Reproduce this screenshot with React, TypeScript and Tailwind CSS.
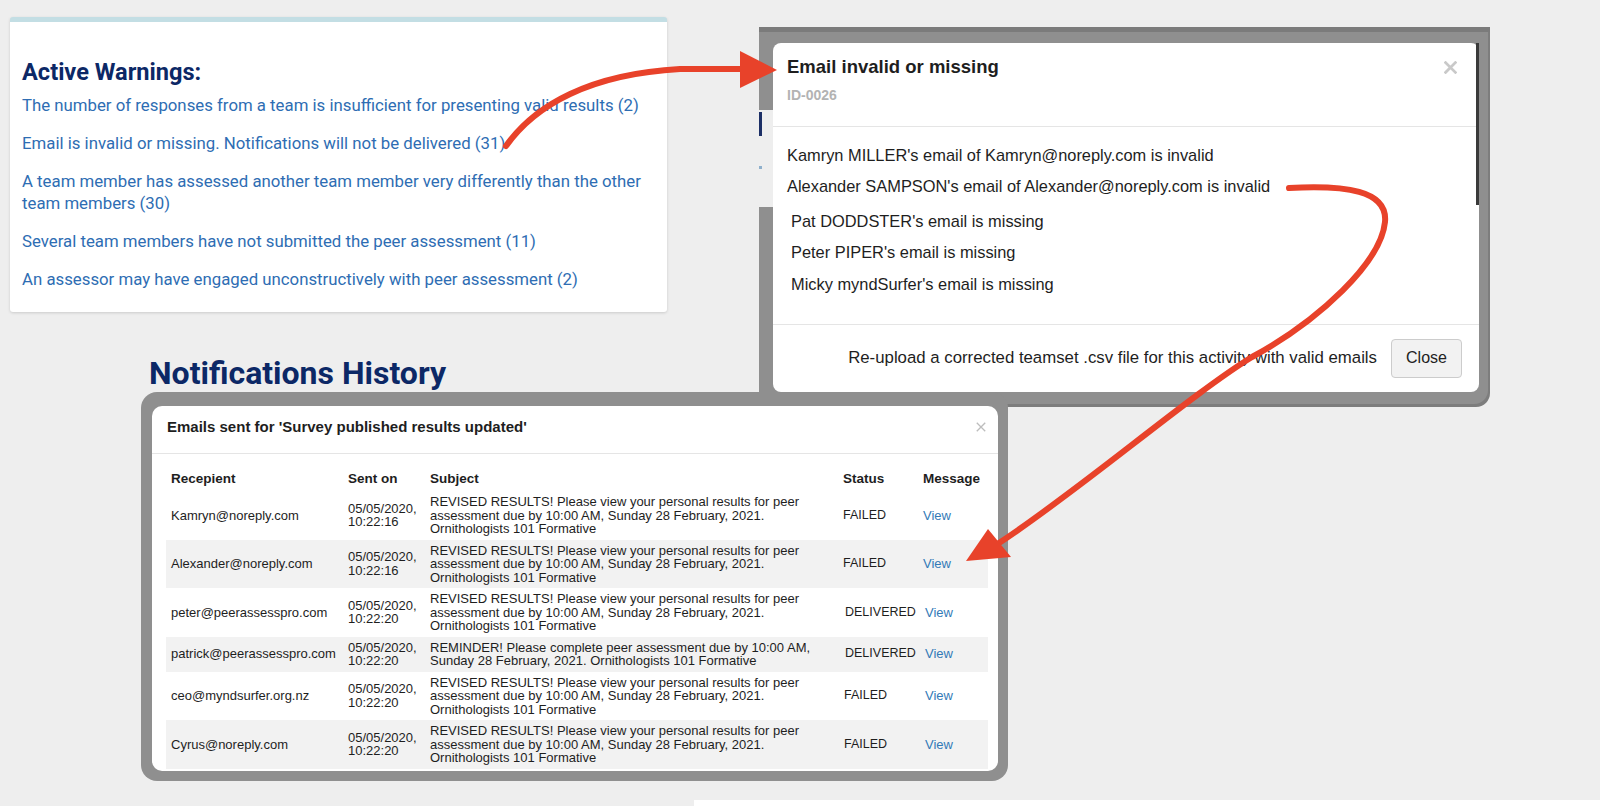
import React from "react";

const REVISED = [
  "REVISED RESULTS! Please view your personal results for peer",
  "assessment due by 10:00 AM, Sunday 28 February, 2021.",
  "Ornithologists 101 Formative",
];
const REMINDER = [
  "REMINDER! Please complete peer assessment due by 10:00 AM,",
  "Sunday 28 February, 2021. Ornithologists 101 Formative",
];

type Row = {
  to: string;
  time: string;
  subject: string[];
  status: string;
  grey: boolean;
  sp: string;
  vp: string;
};

const rows: Row[] = [
  { to: "Kamryn@noreply.com", time: "10:22:16", subject: REVISED, status: "FAILED", grey: false, sp: "pl-[5px]", vp: "pl-[5px]" },
  { to: "Alexander@noreply.com", time: "10:22:16", subject: REVISED, status: "FAILED", grey: true, sp: "pl-[5px]", vp: "pl-[5px]" },
  { to: "peter@peerassesspro.com", time: "10:22:20", subject: REVISED, status: "DELIVERED", grey: false, sp: "pl-[7px]", vp: "pl-[7px]" },
  { to: "patrick@peerassesspro.com", time: "10:22:20", subject: REMINDER, status: "DELIVERED", grey: true, sp: "pl-[7px]", vp: "pl-[7px]" },
  { to: "ceo@myndsurfer.org.nz", time: "10:22:20", subject: REVISED, status: "FAILED", grey: false, sp: "pl-[6px]", vp: "pl-[7px]" },
  { to: "Cyrus@noreply.com", time: "10:22:20", subject: REVISED, status: "FAILED", grey: true, sp: "pl-[6px]", vp: "pl-[7px]" },
];

function CloseX({ size, stroke, color }: { size: number; stroke: number; color: string }) {
  return (
    <svg width={size} height={size} viewBox="0 0 12 12" fill="none">
      <path d="M1.5 1.5 L10.5 10.5 M10.5 1.5 L1.5 10.5" stroke={color} strokeWidth={stroke} strokeLinecap="square" />
    </svg>
  );
}

export default function App() {
  return (
    <div className="relative w-[1600px] h-[806px] overflow-hidden bg-[#eeeeee]">
      {/* Active warnings card */}
      <div className="absolute left-[10px] top-[17px] w-[657px] h-[295px] rounded-[3px] border-t-[5px] border-[#c3dee4] bg-white px-[12px] pt-[36px] shadow-[0_1px_3px_rgba(0,0,0,0.15)] font-['Roboto',sans-serif]">
        <h2 className="text-[23.6px] font-bold leading-[28px] text-[#0c2866]">Active Warnings:</h2>
        <div className="mt-[8px] flex flex-col gap-[16px] text-[16.8px] leading-[22px] text-[#2e6db3]">
          <div>The number of responses from a team is insufficient for presenting valid results (2)</div>
          <div>Email is invalid or missing. Notifications will not be delivered (31)</div>
          <div>
            A team member has assessed another team member very differently than the other
            <br />
            team members (30)
          </div>
          <div>Several team members have not submitted the peer assessment (11)</div>
          <div>An assessor may have engaged unconstructively with peer assessment (2)</div>
        </div>
      </div>

      {/* Notifications History heading */}
      <h1 className="absolute left-[149px] top-[354px] text-[32px] font-bold leading-[38px] text-[#0c2866] font-['Roboto',sans-serif]">
        Notifications History
      </h1>

      {/* Email invalid modal screenshot */}
      <div className="absolute left-[759px] top-[27px] w-[731px] h-[380px] rounded-b-[14px] border-t-[5px] border-[#7b7b7b] bg-[#8f8f8f] pl-[14px] pt-[11px] shadow-[inset_-2px_-3px_0_rgba(0,0,0,0.12)] font-['Liberation_Sans',Arial,sans-serif] text-[#1e1e1e]">
        <div className="absolute left-0 top-[78px] w-[14px] h-[97px] bg-[#eeeeee]">
          <div className="ml-0 mt-[2px] h-[24px] w-[3px] bg-[#1c2f66]" />
          <div className="ml-0 mt-[30px] h-[3px] w-[3px] bg-[#8fb0cc]" />
        </div>
        <div className="relative w-[706px] h-[349px] rounded-[8px] bg-white">
          <div className="absolute right-0 top-0 h-[162px] w-[3px] bg-[#3a3a3a]" />
          <div className="flex border-b border-[#e5e5e5] px-[14px] pb-[23px] pt-[14px]">
            <div className="flex-1">
              <div className="text-[18.5px] font-bold leading-[20px]">Email invalid or missing</div>
              <div className="mt-[10px] text-[14px] font-bold leading-[16px] text-[#b3b3b3]">ID-0026</div>
            </div>
            <div className="mr-[8px] mt-[4px]">
              <CloseX size={13} stroke={2.6} color="#c9c9c9" />
            </div>
          </div>
          <div className="border-b border-[#e5e5e5] px-[14px] pb-[30px] pt-[18px] text-[16.4px] leading-[20px]">
            <div>Kamryn MILLER's email of Kamryn@noreply.com is invalid</div>
            <div className="mt-[11px]">Alexander SAMPSON's email of Alexander@noreply.com is invalid</div>
            <div className="mt-[15px] pl-[4px]">Pat DODDSTER's email is missing</div>
            <div className="mt-[11px] pl-[4px]">Peter PIPER's email is missing</div>
            <div className="mt-[12px] pl-[4px]">Micky myndSurfer's email is missing</div>
          </div>
          <div className="flex h-[66px] items-center justify-end px-[17px]">
            <span className="whitespace-nowrap text-[16.8px]">Re-upload a corrected teamset .csv file for this activity with valid emails</span>
            <button className="ml-[14px] h-[39px] w-[71px] shrink-0 rounded-[4px] border border-[#cccccc] bg-[#f2f2f2] text-[16px] text-[#222]">
              Close
            </button>
          </div>
        </div>
      </div>

      {/* Emails sent modal screenshot */}
      <div className="absolute left-[141px] top-[392px] w-[867px] h-[389px] rounded-[16px] bg-[#8f8f8f] pl-[11px] pt-[14px] font-['Liberation_Sans',Arial,sans-serif] text-[#1e1e1e]">
        <div className="w-[846px] h-[365px] rounded-[10px] bg-white">
          <div className="flex items-center border-b border-[#e5e5e5] pb-[18px] pl-[15px] pr-[12px] pt-[13px]">
            <div className="flex-1 text-[15px] font-bold leading-[16px]">Emails sent for 'Survey published results updated'</div>
            <CloseX size={10} stroke={1.6} color="#bdbdbd" />
          </div>
          <div className="ml-[14px] mt-[13px] w-[822px] text-[13px]">
            <div className="grid grid-cols-[177px_82px_413px_80px_70px] py-[5px] text-[13.5px] font-bold leading-[14px]">
              <div className="pl-[5px]">Recepient</div>
              <div className="pl-[5px]">Sent on</div>
              <div className="pl-[5px]">Subject</div>
              <div className="pl-[5px]">Status</div>
              <div className="pl-[5px]">Message</div>
            </div>
            {rows.map((r, i) => (
              <div
                key={i}
                className={
                  "grid grid-cols-[177px_82px_413px_80px_70px] items-center py-[4px] leading-[13.5px] " +
                  (r.grey ? "bg-[#f2f2f2]" : "bg-white")
                }
              >
                <div className="whitespace-nowrap pl-[5px]">{r.to}</div>
                <div className="pl-[5px]">
                  <div>05/05/2020,</div>
                  <div>{r.time}</div>
                </div>
                <div className="pl-[5px]">
                  {r.subject.map((l, j) => (
                    <div key={j} className="whitespace-nowrap">
                      {l}
                    </div>
                  ))}
                </div>
                <div className={r.sp + " text-[12.5px]"}>{r.status}</div>
                <div className={r.vp + " text-[#337ab7]"}>View</div>
              </div>
            ))}
          </div>
        </div>
      </div>

      {/* white strip bottom */}
      <div className="absolute left-[694px] top-[800px] h-[6px] w-[906px] bg-white" />

      {/* Arrows */}
      <svg className="pointer-events-none absolute left-0 top-0" width="1600" height="806" viewBox="0 0 1600 806">
        <path d="M506 146 C535 105 590 74 680 69 L746 69" fill="none" stroke="#e8422a" strokeWidth="6" strokeLinecap="round" />
        <polygon points="740,51 777,70 740,88" fill="#e8422a" />
        <path
          d="M1289 188 C1345 185 1388 190 1385 222 C1381 262 1320 320 1252 357 C1190 395 1080 490 999 543"
          fill="none"
          stroke="#e8422a"
          strokeWidth="6"
          strokeLinecap="round"
        />
        <polygon points="966,561 988,529 1011,557" fill="#e8422a" />
      </svg>
    </div>
  );
}
